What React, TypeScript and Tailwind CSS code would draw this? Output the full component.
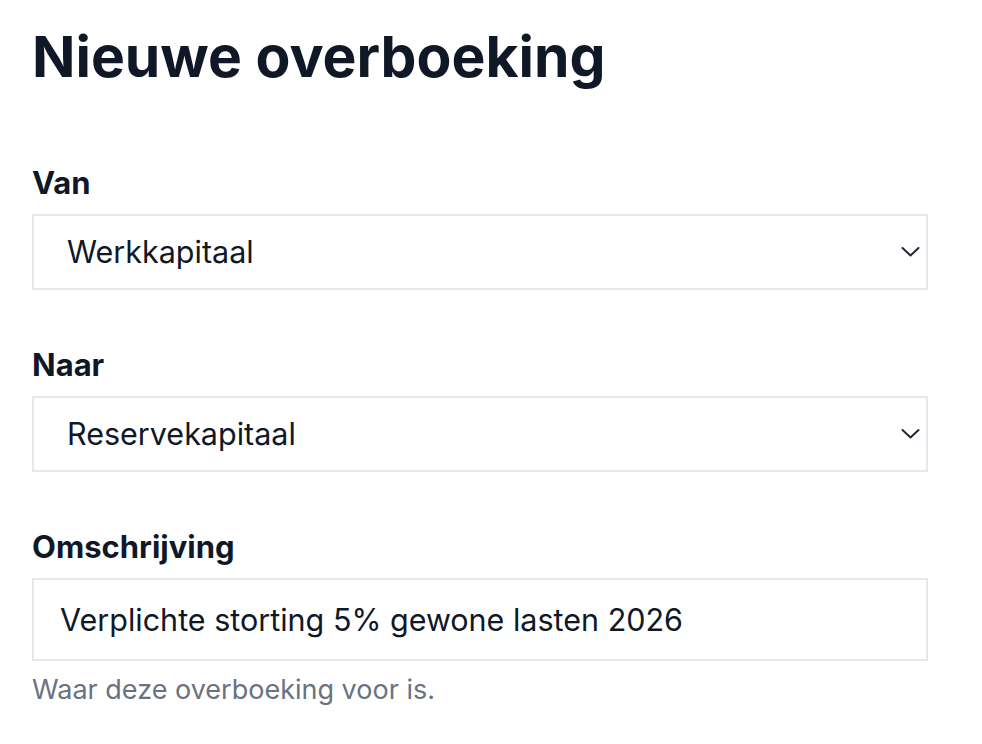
import React from 'react';

const Chevron = () => (
  <svg
    className="pointer-events-none absolute right-[8px] top-1/2 -translate-y-1/2"
    width="19"
    height="11"
    viewBox="0 0 19 11"
    fill="none"
  >
    <polyline points="1.5,1.5 9.5,9 17.5,1.5" stroke="#1f2937" strokeWidth="2" strokeLinecap="round" strokeLinejoin="round" />
  </svg>
);

interface SelectFieldProps {
  label: string;
  value: string;
  options: string[];
}

const SelectField = ({ label, value, options }: SelectFieldProps) => (
  <div className="flex flex-col">
    <label className="text-[31px] font-bold leading-[42px] text-gray-900">{label}</label>
    <div className="relative mt-[10px]">
      <select
        defaultValue={value}
        className="h-[76px] w-full appearance-none border-2 border-gray-200 bg-white pl-[33px] pr-12 text-[30.5px] text-gray-900 focus:outline-none"
      >
        {options.map(o => (
          <option key={o} value={o}>{o}</option>
        ))}
      </select>
      <Chevron />
    </div>
  </div>
);

export default function App() {
  const accounts = ['Werkkapitaal', 'Reservekapitaal'];

  return (
    <div className="min-h-screen bg-white font-['Inter','Noto_Sans',sans-serif] text-gray-900">
      <div className="ml-[32px] w-[896px] pt-[25px]">
        <h1 className="text-[57px] font-bold leading-[64px] text-gray-900">Nieuwe overboeking</h1>

        <div className="mt-[73px] flex flex-col gap-[54px]">
          <SelectField label="Van" value="Werkkapitaal" options={accounts} />
          <SelectField label="Naar" value="Reservekapitaal" options={accounts} />

          <div className="flex flex-col">
            <label className="text-[31px] font-bold leading-[42px] text-gray-900">Omschrijving</label>
            <input
              type="text"
              defaultValue="Verplichte storting 5% gewone lasten 2026"
              className="mt-[10px] h-[83px] w-full border-2 border-gray-200 bg-white px-[26px] text-[30.5px] text-gray-900 focus:outline-none"
            />
            <p className="mt-[11px] text-[27px] leading-[36px] text-gray-500">Waar deze overboeking voor is.</p>
          </div>
        </div>
      </div>
    </div>
  );
}
